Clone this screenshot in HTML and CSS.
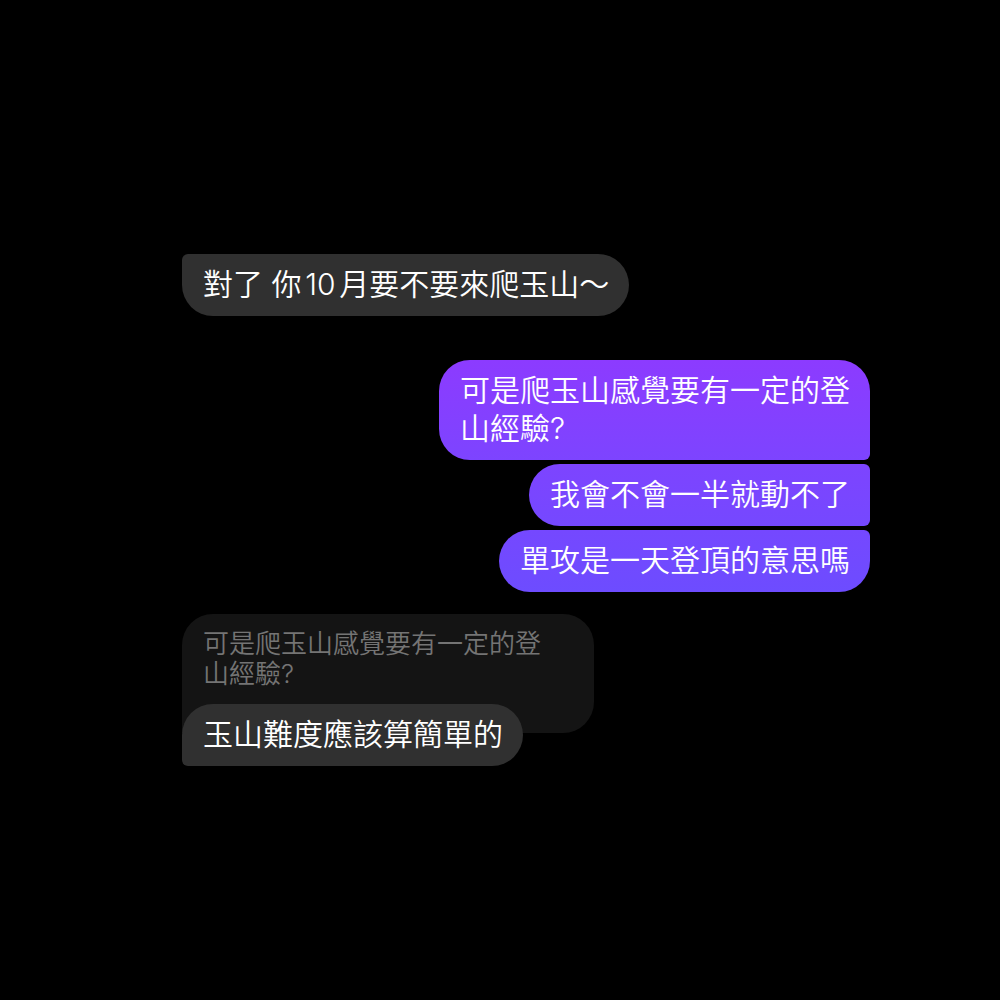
FILE: index.html
```html
<!DOCTYPE html>
<html lang="zh-Hant">
<head>
<meta charset="utf-8">
<meta name="viewport" content="width=device-width, initial-scale=1">
<title>對話</title>
<link rel="stylesheet" href="styles.css">
</head>
<body>
<main class="chat">
  <section class="group received">
    <p class="bubble spaced">對了 你10月要不要來爬玉山～</p>
  </section>
  <section class="group sent">
    <p class="bubble tone-1">可是爬玉山感覺要有一定的登<br>山經驗?</p>
    <p class="bubble tone-2">我會不會一半就動不了</p>
    <p class="bubble tone-3">單攻是一天登頂的意思嗎</p>
  </section>
  <section class="group received reply">
    <blockquote class="quote">可是爬玉山感覺要有一定的登<br>山經驗?</blockquote>
    <p class="bubble">玉山難度應該算簡單的</p>
  </section>
</main>
</body>
</html>
```

FILE: styles.css
```css
* {
  box-sizing: border-box;
}

body {
  margin: 0;
  background: #000;
  color: #fff;
  font-family: Inter, "Noto Sans CJK TC", sans-serif;
  font-weight: 350;
}

.chat {
  display: flex;
  flex-direction: column;
  justify-content: center;
  min-height: 100vh;
  padding: 20px 13% 0 182px;
}

.group {
  display: flex;
  flex-direction: column;
  align-items: flex-start;
  gap: 4px;
}

.bubble {
  margin: 0;
  padding: 11px 20px 13px 21px;
  font-size: 30px;
  line-height: 38px;
  white-space: nowrap;
}

/* thin gap between Chinese characters and digits */
.spaced {
  text-autospace: normal;
}

.received .bubble {
  background: #303030;
  border-radius: 6px 31px 31px 31px;
}

.sent {
  align-items: flex-end;
  margin: 44px 0 22px;
}

.sent .bubble {
  border-radius: 31px 6px 6px 31px;
}

.sent .tone-1 {
  background: linear-gradient(#8c3bff, #7d44ff);
  border-top-right-radius: 31px;
}

.sent .tone-2 {
  background: linear-gradient(#7d44ff, #7548ff);
}

.sent .tone-3 {
  background: linear-gradient(#7548ff, #6d4cff);
  border-bottom-right-radius: 31px;
}

.reply {
  gap: 0;
}

.quote {
  margin: 0 0 -29px;
  padding: 15px 53px 44px 21px;
  background: #141414;
  border-radius: 31px 31px 31px 0;
  color: #747474;
  font-size: 26px;
  line-height: 30px;
  white-space: nowrap;
}

.reply .bubble {
  border-radius: 31px 31px 31px 6px;
}
```
